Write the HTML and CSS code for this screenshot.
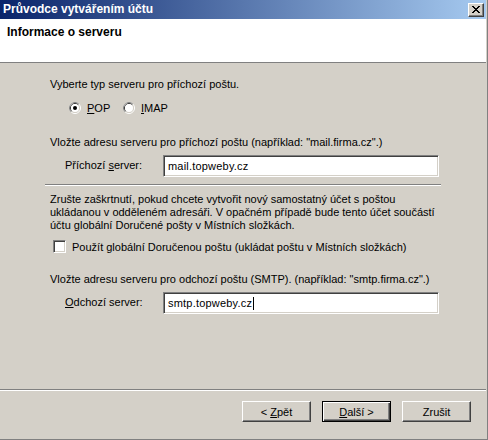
FILE: index.html
```html
<!DOCTYPE html>
<html lang="cs">
<head>
<meta charset="utf-8">
<title>Průvodce vytvářením účtu</title>
<link rel="stylesheet" href="styles.css">
</head>
<body>
<div class="window">
  <div class="titlebar">
    <span class="title">Průvodce vytvářením účtu</span>
    <span class="close"><svg width="8" height="7" viewBox="0 0 8 7" shape-rendering="crispEdges"><path fill="#000" d="M0 0h2v1H0zM6 0h2v1H6zM1 1h2v1H1zM5 1h2v1H5zM2 2h4v1H2zM3 3h2v1H3zM2 4h4v1H2zM1 5h2v1H1zM5 5h2v1H5zM0 6h2v1H0zM6 6h2v1H6z"/></svg></span>
  </div>
  <div class="header">
    <div class="header-title">Informace o serveru</div>
  </div>
  <div class="main">
    <p class="text t1">Vyberte typ serveru pro příchozí poštu.</p>
    <div class="radios">
      <div class="radio radio-pop">
        <svg width="12" height="12" viewBox="0 0 12 12"><circle cx="6" cy="6" r="5.5" fill="none" stroke="#fff"/><circle cx="6" cy="6" r="4.5" fill="none" stroke="#d4d0c8"/><path d="M2.11 9.89A5.5 5.5 0 0 1 9.89 2.11" fill="none" stroke="#808080"/><path d="M2.82 9.18A4.5 4.5 0 0 1 9.18 2.82" fill="none" stroke="#404040"/><circle cx="6" cy="6" r="4" fill="#fff"/><circle cx="6" cy="6" r="2" fill="#000"/></svg>
        <span class="radio-label"><u>P</u>OP</span>
      </div>
      <div class="radio">
        <svg width="12" height="12" viewBox="0 0 12 12"><circle cx="6" cy="6" r="5.5" fill="none" stroke="#fff"/><circle cx="6" cy="6" r="4.5" fill="none" stroke="#d4d0c8"/><path d="M2.11 9.89A5.5 5.5 0 0 1 9.89 2.11" fill="none" stroke="#808080"/><path d="M2.82 9.18A4.5 4.5 0 0 1 9.18 2.82" fill="none" stroke="#404040"/><circle cx="6" cy="6" r="4" fill="#fff"/></svg>
        <span class="radio-label"><u>I</u>MAP</span>
      </div>
    </div>
    <p class="text t2">Vložte adresu serveru pro příchozí poštu (například: "mail.firma.cz".)</p>
    <div class="field f1">
      <span class="field-label">Příchozí <u>s</u>erver:</span>
      <span class="input"><span>mail.topweby.cz</span></span>
    </div>
    <div class="sep"></div>
    <p class="text t3">Zrušte zaškrtnutí, pokud chcete vytvořit nový samostatný účet s poštou<br>ukládanou v odděleném adresáři. V opačném případě bude tento účet součástí<br>účtu globální Doručené pošty v Místních složkách.</p>
    <div class="check">
      <span class="box"></span>
      <span class="check-label">Použít globální Doručenou poštu (ukládat poštu v Místních složkách)</span>
    </div>
    <p class="text t4">Vložte adresu serveru pro odchozí poštu (SMTP). (například: "smtp.firma.cz".)</p>
    <div class="field f2">
      <span class="field-label"><u>O</u>dchozí server:</span>
      <span class="input"><span>smtp.topweby.cz</span><span class="caret"></span></span>
    </div>
  </div>
  <div class="footer">
    <div class="footer-sep"></div>
    <div class="buttons">
      <span class="btn"><span>&lt; <u>Z</u>pět</span></span>
      <span class="btn btn-default"><span><u>D</u>alší &gt;</span></span>
      <span class="btn"><span>Zrušit</span></span>
    </div>
  </div>
</div>
</body>
</html>
```
FILE: styles.css
```css
html, body {
  margin: 0;
  padding: 0;
  background: #d4d0c8;
}
body {
  width: 488px;
  height: 440px;
  overflow: hidden;
  font-family: "Liberation Sans", Arial, sans-serif;
  font-size: 11px;
  color: #000;
}
.window {
  width: 488px;
  height: 440px;
  box-sizing: border-box;
  border-right: 1px solid #808080;
  border-bottom: 1px solid #808080;
  padding-right: 1px;
  background: #d4d0c8;
  display: flex;
  flex-direction: column;
}
.titlebar {
  height: 19px;
  flex: none;
  background: linear-gradient(to right, #0a246a, #a6caf0);
  display: flex;
  align-items: flex-start;
  justify-content: space-between;
}
.title {
  padding-left: 3px;
  color: #fff;
  font-weight: bold;
  font-size: 12px;
  line-height: 19px;
  white-space: nowrap;
}
.close {
  margin: 3px 2px 0 0;
  width: 16px;
  height: 14px;
  box-sizing: border-box;
  border: 1px solid;
  border-color: #fff #404040 #404040 #fff;
  box-shadow: inset -1px -1px #808080;
  background: #d4d0c8;
  display: flex;
  align-items: center;
  justify-content: center;
  padding: 0 1px 1px 0;
}
.close svg {
  display: block;
}
.header {
  height: 44px;
  flex: none;
  box-sizing: border-box;
  background: #fff;
  border-bottom: 1px solid #808080;
  padding: 6px 0 0 7px;
}
.header-title {
  font-weight: bold;
  font-size: 12px;
  line-height: 15px;
  white-space: nowrap;
}
.main {
  flex: 1;
  padding-left: 50px;
}
.text {
  margin: 0;
  line-height: 13px;
  white-space: nowrap;
}
.t1 { margin-top: 15px; }
.t2 { margin-top: 21px; }
.t3 { margin-top: 7px; }
.t4 { margin-top: 19px; }
.radios {
  margin-top: 11px;
  padding-left: 19px;
  display: flex;
  height: 13px;
}
.radio {
  display: flex;
  align-items: flex-start;
  line-height: 13px;
}
.radio svg {
  display: block;
  flex: none;
}
.radio-pop {
  width: 54px;
}
.radio-label {
  margin-left: 6px;
  white-space: nowrap;
}
.field {
  display: flex;
  align-items: flex-start;
  padding-left: 15px;
}
.f1, .f2 { margin-top: 6px; }
.field-label {
  width: 98px;
  margin-top: 4px;
  line-height: 13px;
  white-space: nowrap;
}
.input {
  width: 276px;
  height: 22px;
  box-sizing: border-box;
  border: 1px solid;
  border-color: #808080 #fff #fff #808080;
  box-shadow: inset 1px 1px #404040, inset -1px -1px #d4d0c8;
  background: #fff;
  padding: 0 4px;
  line-height: 19px;
  white-space: nowrap;
  display: flex;
  align-items: center;
  letter-spacing: 0.2px;
}
.caret {
  display: inline-block;
  width: 1px;
  height: 13px;
  background: #000;
  margin-left: 1px;
}
.sep {
  margin-top: 7px;
  margin-left: -5px;
  width: 396px;
  border-top: 1px solid #808080;
  border-bottom: 1px solid #fff;
}
.check {
  margin-top: 8px;
  display: flex;
  align-items: flex-start;
}
.box {
  margin-left: 3px;
  width: 13px;
  height: 13px;
  flex: none;
  box-sizing: border-box;
  border: 1px solid;
  border-color: #808080 #fff #fff #808080;
  box-shadow: inset 1px 1px #404040, inset -1px -1px #d4d0c8;
  background: #fff;
}
.check-label {
  margin-left: 6px;
  margin-top: 1px;
  line-height: 13px;
  white-space: nowrap;
}
.footer {
  flex: none;
  height: 50px;
}
.footer-sep {
  border-top: 1px solid #808080;
  border-bottom: 1px solid #fff;
}
.buttons {
  display: flex;
  justify-content: flex-end;
  gap: 11px;
  padding: 10px 15px 0 0;
}
.btn {
  width: 69px;
  height: 21px;
  box-sizing: border-box;
  border: 1px solid;
  border-color: #fff #404040 #404040 #fff;
  box-shadow: inset -1px -1px #808080;
  background: #d4d0c8;
  display: flex;
  align-items: center;
  justify-content: center;
  line-height: 13px;
  padding-top: 1px;
  white-space: nowrap;
}
.btn-default {
  border-color: #000;
  box-shadow: inset 1px 1px #fff, inset -1px -1px #404040, inset -2px -2px #808080;
}
```
